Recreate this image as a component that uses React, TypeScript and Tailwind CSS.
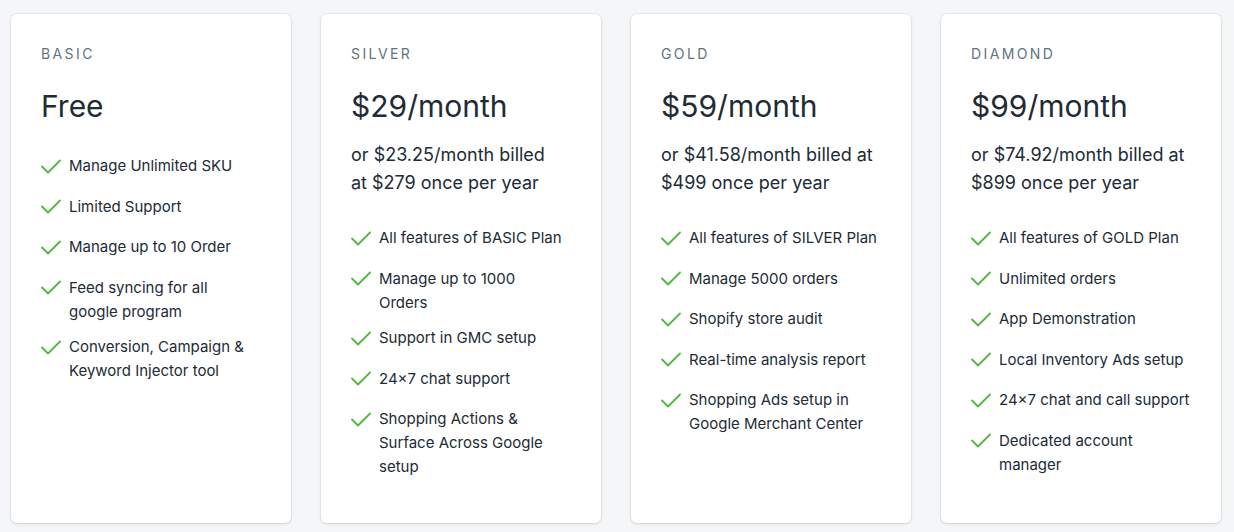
import React from "react";

type Plan = {
  name: string;
  price: string;
  sub?: string[];
  features: string[][];
};

const plans: Plan[] = [
  {
    name: "BASIC",
    price: "Free",
    features: [
      ["Manage Unlimited SKU"],
      ["Limited Support"],
      ["Manage up to 10 Order"],
      ["Feed syncing for all", "google program"],
      ["Conversion, Campaign &", "Keyword Injector tool"],
    ],
  },
  {
    name: "SILVER",
    price: "$29/month",
    sub: ["or $23.25/month billed", "at $279 once per year"],
    features: [
      ["All features of BASIC Plan"],
      ["Manage up to 1000", "Orders"],
      ["Support in GMC setup"],
      ["24×7 chat support"],
      ["Shopping Actions &", "Surface Across Google", "setup"],
    ],
  },
  {
    name: "GOLD",
    price: "$59/month",
    sub: ["or $41.58/month billed at", "$499 once per year"],
    features: [
      ["All features of SILVER Plan"],
      ["Manage 5000 orders"],
      ["Shopify store audit"],
      ["Real-time analysis report"],
      ["Shopping Ads setup in", "Google Merchant Center"],
    ],
  },
  {
    name: "DIAMOND",
    price: "$99/month",
    sub: ["or $74.92/month billed at", "$899 once per year"],
    features: [
      ["All features of GOLD Plan"],
      ["Unlimited orders"],
      ["App Demonstration"],
      ["Local Inventory Ads setup"],
      ["24×7 chat and call support"],
      ["Dedicated account", "manager"],
    ],
  },
];

function Check() {
  return (
    <svg width="20" height="15" viewBox="0 0 20 15" fill="none">
      <path
        d="M1 7.5 L7 13.5 L19 1.5"
        stroke="#50b83c"
        strokeWidth="1.8"
        strokeLinecap="round"
        strokeLinejoin="round"
      />
    </svg>
  );
}

function Card({ plan }: { plan: Plan }) {
  return (
    <div className="h-[509px] w-[280px] rounded-[6px] bg-white px-[30px] pt-[30px] shadow-[0_0_0_1px_rgba(63,63,68,0.05),0_1px_3px_0_rgba(63,63,68,0.15)]">
      <div className="text-[14px] leading-[20px] tracking-[2.4px] text-[#637381]">
        {plan.name}
      </div>
      <div className="mt-[24px] text-[30px] leading-[36px] text-[#212b36]">
        {plan.price}
      </div>
      {plan.sub && (
        <div className="mt-[17px] text-[18px] leading-[28px] text-[#212b36]">
          {plan.sub.map((l, i) => (
            <div key={i}>{l}</div>
          ))}
        </div>
      )}
      <ul className={plan.sub ? "mt-[29px] flex flex-col gap-[11.5px]" : "mt-[30px] flex flex-col gap-[11.5px]"}>
        {plan.features.map((f, i) => (
          <li key={i} className="flex min-h-[29px] items-start">
            <div className="flex h-[24px] w-[28px] shrink-0 items-center">
              <Check />
            </div>
            <div className="text-[15px] leading-[24px] text-[#212b36]">
              {f.map((l, j) => (
                <div key={j}>{l}</div>
              ))}
            </div>
          </li>
        ))}
      </ul>
    </div>
  );
}

export default function App() {
  return (
    <div
      className="flex h-[532px] w-full gap-[30px] bg-[#f4f6f8] pl-[11px] pt-[14px]"
      style={{ fontFamily: "Inter, Roboto, sans-serif" }}
    >
      {plans.map((p) => (
        <Card key={p.name} plan={p} />
      ))}
    </div>
  );
}
